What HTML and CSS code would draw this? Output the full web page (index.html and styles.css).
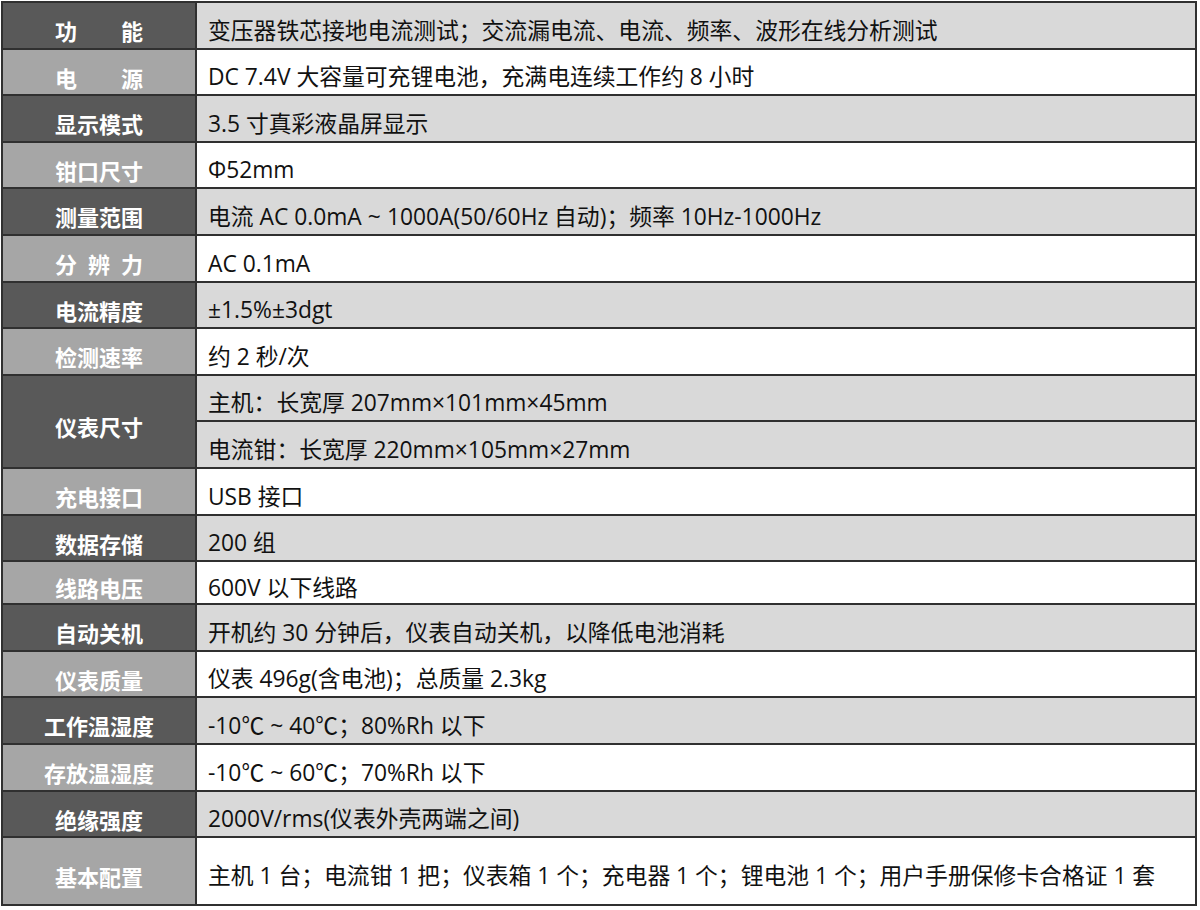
FILE: index.html
```html
<!DOCTYPE html>
<html lang="zh-CN">
<head>
<meta charset="utf-8">
<title>技术参数</title>
<link rel="stylesheet" href="styles.css">
</head>
<body>
<table class="spec">
  <colgroup><col class="c-key"><col class="c-val"></colgroup>
  <tbody>
    <tr class="dark"><th>功　　能</th><td>变压器铁芯接地电流测试；交流漏电流、电流、频率、波形在线分析测试</td></tr>
    <tr class="light"><th>电　　源</th><td>DC 7.4V 大容量可充锂电池，充满电连续工作约 8 小时</td></tr>
    <tr class="dark"><th>显示模式</th><td>3.5 寸真彩液晶屏显示</td></tr>
    <tr class="light"><th>钳口尺寸</th><td>Φ52mm</td></tr>
    <tr class="dark"><th>测量范围</th><td>电流 AC 0.0mA<span class="tilde">~</span>1000A(50/60Hz 自动)；频率 10Hz-1000Hz</td></tr>
    <tr class="light"><th>分&#8194;辨&#8194;力</th><td>AC 0.1mA</td></tr>
    <tr class="dark"><th>电流精度</th><td>±1.5%±3dgt</td></tr>
    <tr class="light"><th>检测速率</th><td>约 2 秒/次</td></tr>
    <tr class="dark"><th rowspan="2">仪表尺寸</th><td>主机：长宽厚 207mm×101mm×45mm</td></tr>
    <tr class="dark"><td>电流钳：长宽厚 220mm×105mm×27mm</td></tr>
    <tr class="light"><th>充电接口</th><td>USB 接口</td></tr>
    <tr class="dark"><th>数据存储</th><td>200 组</td></tr>
    <tr class="light short"><th>线路电压</th><td>600V 以下线路</td></tr>
    <tr class="dark"><th>自动关机</th><td>开机约 30 分钟后，仪表自动关机，以降低电池消耗</td></tr>
    <tr class="light"><th>仪表质量</th><td>仪表 496g(含电池)；总质量 2.3kg</td></tr>
    <tr class="dark"><th>工作温湿度</th><td>-10℃<span class="tilde">~</span>40℃；80%Rh 以下</td></tr>
    <tr class="light"><th>存放温湿度</th><td>-10℃<span class="tilde">~</span>60℃；70%Rh 以下</td></tr>
    <tr class="dark"><th>绝缘强度</th><td>2000V/rms(仪表外壳两端之间)</td></tr>
    <tr class="light tall"><th>基本配置</th><td>主机 1 台；电流钳 1 把；仪表箱 1 个；充电器 1 个；锂电池 1 个；用户手册保修卡合格证 1 套</td></tr>
  </tbody>
</table>
</body>
</html>
```
FILE: styles.css
```css
html, body {
  margin: 0;
  padding: 0;
  background: #ffffff;
}
body {
  padding: 1px 0 0 1px;
}
.spec {
  border-collapse: collapse;
  table-layout: fixed;
  width: 1196px;
  font-family: "Open Sans", "Noto Sans CJK SC", sans-serif;
  font-size: 22.8px;
  color: #111111;
}
.c-key { width: 194px; }
.spec tr { height: 46.6px; }
.spec tr.short { height: 43px; }
.spec tr.tall { height: 68px; }
.spec th, .spec td {
  border: 2px solid #303030;
  padding: 10px 0 0 0;
  vertical-align: middle;
  line-height: 1.2;
}
.spec th {
  font-family: "Noto Sans CJK SC", sans-serif;
  font-weight: 700;
  font-size: 22px;
  color: #ffffff;
  text-align: center;
  white-space: nowrap;
}
.spec td {
  text-align: left;
  padding-left: 11px;
  white-space: nowrap;
}
.tilde {
  display: inline-block;
  width: 1.1em;
  text-align: center;
}
.dark th { background: #595959; }
.dark td { background: #d9d9d9; }
.light th { background: #a6a6a6; }
.light td { background: #ffffff; }
```
